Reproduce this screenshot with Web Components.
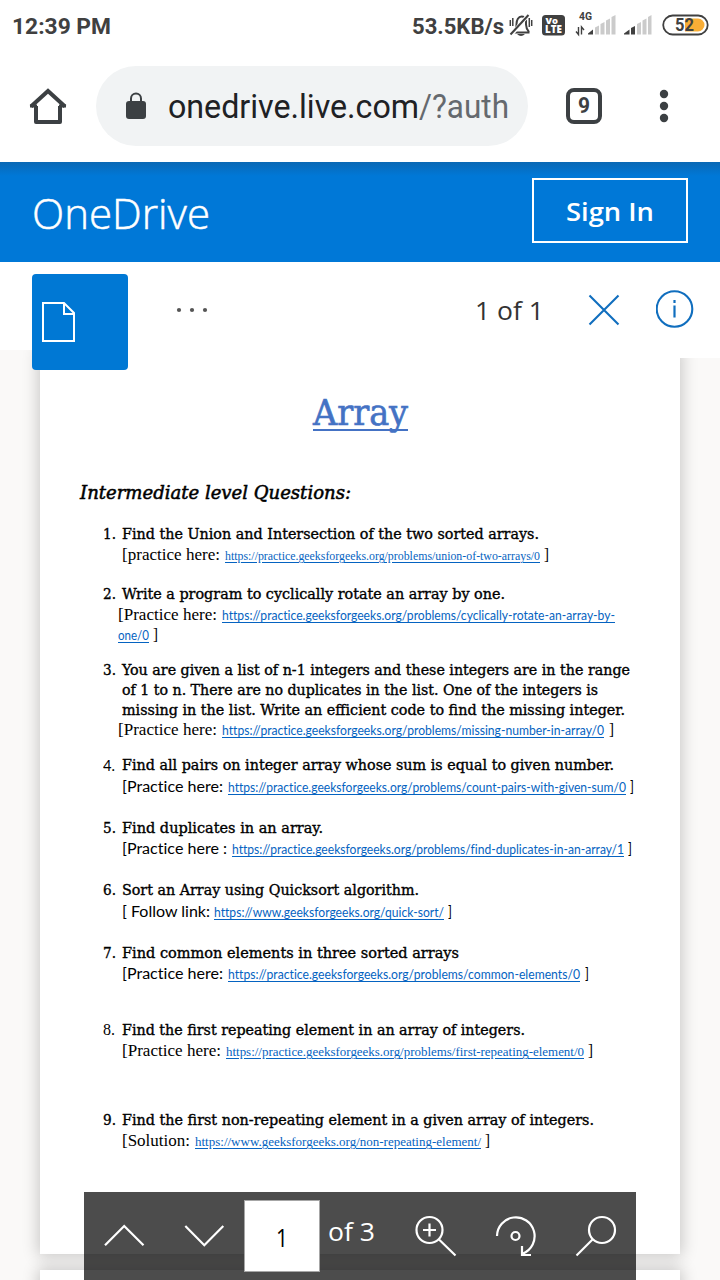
<!DOCTYPE html>
<html lang="en">
<head>
<meta charset="utf-8">
<title>OneDrive</title>
<style>
html,body{margin:0;padding:0}
body{width:720px;height:1280px;overflow:hidden;background:#fff;font-family:Roboto,sans-serif}
</style>
</head>
<body>
<phone-screen></phone-screen>
<script>
function define(name, html, ready){
  const t = document.createElement('template');
  t.innerHTML = html.trim();
  customElements.define(name, class extends HTMLElement{
    constructor(){
      super();
      this.attachShadow({mode:'open'}).appendChild(t.content.cloneNode(true));
    }
    connectedCallback(){ if(ready) ready(this, this.shadowRoot); }
  });
}

/* A run of text set to an exact advance width. */
define('text-run', `<style>
:host{display:inline-block;white-space:pre;line-height:20px;flex:none;color:#000}
span{display:inline-block;transform-origin:0 50%}
:host([face=cambria]){font:15.4px/20px "DejaVu Serif Condensed","DejaVu Serif",serif;font-stretch:condensed;-webkit-text-stroke:.35px #000}
:host([face=heading]){font:italic 18.4px/24px "DejaVu Serif Condensed","DejaVu Serif",serif;font-stretch:condensed;-webkit-text-stroke:.5px #000}
:host([face=title]){font:35px/44px "DejaVu Serif Condensed","DejaVu Serif",serif;font-stretch:condensed;color:#4472c4;-webkit-text-stroke:.6px #4472c4}
:host([face=times]){font:16.5px/20px "Liberation Serif",serif}
:host([face=calibri]){font:15.6px/20px Lato,sans-serif;font-variant-ligatures:none}
:host([face=tlink]){font:13px/20px "Liberation Serif",serif;color:#0563c1}
:host([face=clink]){font:12.6px/20px Lato,sans-serif;color:#0563c1;font-variant-ligatures:none}
:host([face$=link]) span{text-decoration:underline;text-decoration-thickness:1px;text-underline-offset:2px}
</style><span><slot></slot></span>`, (el, root)=>{
  const w = parseFloat(el.getAttribute('w')), s = root.querySelector('span');
  const n = s.getBoundingClientRect().width;
  if(w && n){ s.style.transform = 'scaleX(' + (w/n) + ')'; el.style.width = w + 'px'; s.style.width = n + 'px'; }
});

define('status-bar', `
<style>
:host{display:flex;height:52px;align-items:center;box-sizing:border-box;padding:0 11px 0 12px;color:#404040}
text-run{color:#404040;font:bold 22px/26px Roboto,sans-serif;margin-top:2px}
svg{display:block;flex:none}
.sp{flex:1}
.speed{margin-right:5px}
</style>
<text-run w="99">12:39 PM</text-run><div class="sp"></div>
<text-run class="speed" w="92">53.5KB/s</text-run>
<svg width="200" height="52" viewBox="509 0 200 52" fill="none" stroke="#404040">
 <path d="M512.5 32.500h17M514 32c2-2 2.500-4 2.500-8 0-4 2-7.500 5-7.500 2.500 0 4 1.500 4.500 4v4c0 3 1 5 3 7.500" stroke-width="2"/>
 <path d="M511.500 34.500l17-20" stroke="#fff" stroke-width="4"/><path d="M510.500 34.500l18-19.500" stroke-width="2"/>
 <path d="M510.300 20v6M512.800 18v8M531.700 20v6M529.300 18v9" stroke-width="1.500"/><path d="M517 34q4 4 8 0z" fill="#404040" stroke="none"/>
 <rect x="542" y="15" width="23" height="20.500" rx="3.500" fill="#404040" stroke="none"/>
 <text x="545.500" y="24" font-family="Open Sans" font-weight="800" font-size="9" textLength="12.500" lengthAdjust="spacingAndGlyphs" fill="#fff" stroke="none">Vo</text>
 <text x="545" y="33.300" font-family="Open Sans" font-weight="800" font-size="10" textLength="17" lengthAdjust="spacingAndGlyphs" fill="#fff" stroke="none">LTE</text>
 <text x="579" y="20" font-family="Roboto" font-weight="700" font-size="10" textLength="13" lengthAdjust="spacingAndGlyphs" fill="#404040" stroke="none">4G</text>
 <path d="M578.500 27v7.500l-2.500-3M581.500 34.500v-7.500l2.500 3" stroke-width="1.400"/>
 <g stroke="none" fill="#404040"><path d="M588 34.500v-1l5-4v5zM624 34.500v-1l5.500-4v5zM631 34.500v-6.500l4-2v8.500z"/></g>
 <g stroke="none" fill="#cbcbcb"><path d="M595 34.500v-7l4-2v9zM600.500 34.500v-10.500l4-2v12.500zM606 34.500v-14l4-2v16zM611.500 34.500v-17.500l4-2v19.500zM637 34.500v-10.500l4-2v12.500zM642.500 34.500v-14l4-2v16zM648 34.500v-17.500l3.500-2v19.500z"/></g>
 <rect x="663.200" y="15.500" width="44.500" height="19" rx="9.500" stroke-width="1.800"/>
 <path d="M685 18.500h13a6.500 6.500 0 0 1 0 13h-13z" fill="#f8ad36" stroke="none"/>
 <text x="675" y="31" font-family="Roboto" font-weight="700" font-size="17.500" textLength="19" lengthAdjust="spacingAndGlyphs" fill="#404040" stroke="none">52</text>
</svg>`);

define('browser-bar', `
<style>
:host{display:flex;height:110px;box-sizing:border-box;padding:14px 0 0 28px}
svg{display:block;flex:none}
.omni{width:432px;height:80px;border-radius:40px;background:#f1f3f4;margin-left:28px;display:flex;align-items:center;box-sizing:border-box;padding-left:29px}
.lock{margin-right:21px}
text-run{font:33px/44px Roboto,sans-serif;color:#202124;margin-top:2px}
.dim{color:#65696e}
.tab{width:36px;height:36px;box-sizing:border-box;border:4px solid #3c4043;border-radius:8px;margin:22px 0 0 38px;display:grid;place-items:center}
.tab text-run{font:bold 22px/26px Roboto,sans-serif;color:#3c4043;margin:0}
.dots{margin:22px 0 0 54px}
</style>
<svg width="40" height="80" viewBox="28 66 40 80" fill="none" stroke="#3c4043" stroke-width="4" stroke-linejoin="round"><path d="M36 106v16h24v-16" /><path d="M31 106.500l17-15.500 17 15.500" stroke-linejoin="miter"/><path d="M30 106h7M59 106h7" stroke-width="3"/></svg>
<div class="omni">
<svg class="lock" width="22" height="30" viewBox="0 0 22 30"><rect x="1" y="10" width="20" height="18" rx="3" fill="#3c4043"/><path d="M6 11V7.500a5 5 0 0 1 10 0V11" fill="none" stroke="#3c4043" stroke-width="2"/></svg>
<text-run w="251">onedrive.live.com</text-run><text-run class="dim" w="90">/?auth</text-run>
</div>
<div class="tab"><text-run w="12">9</text-run></div>
<svg class="dots" width="16" height="38" viewBox="0 0 16 38" fill="#3c4043"><circle cx="8" cy="6" r="4.200"/><circle cx="8" cy="18" r="4.200"/><circle cx="8" cy="30" r="4.200"/></svg>`);

define('site-header', `
<style>
:host{display:flex;height:100px;box-sizing:border-box;padding:16px 32px;justify-content:space-between;background:linear-gradient(#0a68b4,#0078d7 14px)}
.brand{font:300 42px/70px "Open Sans",sans-serif;color:#fff;-webkit-text-stroke:.5px #fff}
.btn{width:156px;height:65px;border:2px solid #fff;box-sizing:border-box;display:grid;place-items:center}
.btn text-run{font:600 25px/34px "Open Sans",sans-serif;color:#fff}
</style>
<text-run class="brand" w="178">OneDrive</text-run>
<div class="btn"><text-run w="88">Sign In</text-run></div>`);

define('file-toolbar', `
<style>
:host{display:flex;height:88px;background:#fff;box-sizing:border-box;padding:12px 26px 0 32px;position:relative;z-index:2}
.tile{width:96px;height:96px;flex:none;background:#0078d4;border-radius:4px}
svg{display:block;flex:none}
.more{margin:32px 0 0 46px}
text-run{margin:16px 0 0 265px;font:25px/40px "Open Sans",sans-serif;color:#333;height:40px}
.x{margin:20px 0 0 44px}.i{margin:14px 0 0 34px}
</style>
<div class="tile"><svg width="96" height="96" fill="none" stroke="#fff" stroke-width="2"><path d="M11 29h21l10 10v28H11z M32 29v11h10"/></svg></div>
<svg class="more" width="36" height="8" fill="#555"><circle cx="5" cy="4" r="2.100"/><circle cx="18" cy="4" r="2.100"/><circle cx="31" cy="4" r="2.100"/></svg>
<text-run w="69">1 of 1</text-run>
<svg class="x" width="34" height="34" stroke="#106ebe" stroke-width="2.100"><path d="M1.500 1.500l29 29M30.500 1.500l-29 29"/></svg>
<svg class="i" width="40" height="40" fill="none" stroke="#106ebe" stroke-width="2.100"><circle cx="18.500" cy="21" r="17.800"/><path d="M18.500 17.500v12M18.500 12v3" stroke-width="2.200"/></svg>`);

define('question-item', `
<style>
:host{display:grid;grid-template-columns:19px 1fr;padding-left:63px}
.n{height:20px;display:flex;align-items:baseline}
</style><div class="n"><slot name="n"></slot></div><div><slot></slot></div>`);

define('text-row', `
<style>:host{display:flex;height:20px;align-items:baseline;white-space:nowrap}</style><slot></slot>`);

const T='practice.geeksforgeeks.org/problems/';
const questions=[
 [0,['cambria',13,'1.'],[[0,0,['cambria',417,'Find the Union and Intersection of the two sorted arrays.']],
   [1,0,['times',98,'[practice here:'],['tlink',315,'https://'+T+'union-of-two-arrays/0',5],['times',5,']',4]]]],
 [19,['cambria',13,'2.'],[[0,0,['cambria',383,'Write a program to cyclically rotate an array by one.']],
   [1,-4,['times',99,'[Practice here:'],['clink',393,'https://'+T+'cyclically-rotate-an-array-by-',5]],
   [0,-4,['clink',31,'one/0'],['times',5,']',4]]]],
 [15,['cambria',13,'3.'],[[0,0,['cambria',508,'You are given a list of n-1 integers and these integers are in the range']],
   [0,0,['cambria',476,'of 1 to n. There are no duplicates in the list. One of the integers is']],
   [0,0,['cambria',503,'missing in the list. Write an efficient code to find the missing integer.']],
   [0,-4,['times',99,'[Practice here:'],['clink',382,'https://'+T+'missing-number-in-array/0',5],['times',5,']',5]]]],
 [15,['calibri',12,'4.'],[[0,0,['cambria',492,'Find all pairs on integer array whose sum is equal to given number.']],
   [1,0,['calibri',101,'[Practice here:'],['clink',398,'https://'+T+'count-pairs-with-given-sum/0',5],['calibri',4,']',4]]]],
 [22,['cambria',13,'5.'],[[0,0,['cambria',201,'Find duplicates in an array.']],
   [0,0,['calibri',105,'[Practice here :'],['clink',392,'https://'+T+'find-duplicates-in-an-array/1',5],['calibri',4,']',4]]]],
 [22,['cambria',13,'6.'],[[0,0,['cambria',297,'Sort an Array using Quicksort algorithm.']],
   [1,0,['calibri',88,'[ Follow link:'],['clink',230,'https://www.geeksforgeeks.org/quick-sort/',4],['calibri',4,']',4]]]],
 [22,['cambria',13,'7.'],[[0,0,['cambria',337,'Find common elements in three sorted arrays']],
   [0,0,['calibri',101,'[Practice here:'],['clink',352,'https://'+T+'common-elements/0',5],['calibri',4,']',5]]]],
 [37,['times',12,'8.'],[[0,0,['cambria',403,'Find the first repeating element in an array of integers.']],
   [1,0,['times',99,'[Practice here:'],['tlink',358,'https://'+T+'first-repeating-element/0',5],['times',5,']',4]]]],
 [49,['cambria',13,'9.'],[[0,0,['cambria',472,'Find the first non-repeating element in a given array of integers.']],
   [1,0,['times',68,'[Solution:'],['tlink',286,'https://www.geeksforgeeks.org/non-repeating-element/',5],['times',5,']',4]]]]
];
const run=([f,w,t,m=0],slot='')=>`<text-run ${slot} face="${f}" w="${w}" style="margin-left:${m}px">${t}</text-run>`;
const list=questions.map(([gap,n,rows])=>`<question-item style="margin-top:${gap}px">${run(n,'slot="n"')}${
  rows.map(([mt,ml,...segs])=>`<text-row style="margin-top:${mt}px;margin-left:${ml}px">${segs.map(s=>run(s)).join('')}</text-row>`).join('')
}</question-item>`).join('');

define('document-page', `
<style>
:host{display:block;flex:none;width:640px;height:904px;background:#fff;box-shadow:0 0 15px 2px rgba(0,0,0,.2);box-sizing:border-box;padding-top:41px;margin:0 40px}
.title{display:flex;justify-content:center;height:44px}
.title div{height:38px;border-bottom:2px solid #4472c4}
.h{padding:46px 0 0 40px;height:43px}
</style>
<div class="title"><div><text-run face="title" w="95">Array</text-run></div></div>
<div class="h"><text-run face="heading" w="271">Intermediate level Questions:</text-run></div>
${list}`);

define('page-controls', `
<style>
:host{display:flex;position:absolute;left:84px;bottom:0;width:552px;height:88px;background:rgba(0,0,0,.7);z-index:3}
svg{display:block;flex:none}
.box{width:76px;height:72px;box-sizing:border-box;border:1px solid #a6a6a6;background:#fff;margin-top:8px;display:grid;place-items:center;flex:none}
.box text-run{font:25px/34px "Open Sans",sans-serif;color:#000;margin-top:2px}
.of{font:25px/34px "Open Sans",sans-serif;color:#fff;margin:22px 0 0 8px;height:34px}
</style>
<svg width="160" height="88" viewBox="84 1192 160 88" fill="none" stroke="#fff" stroke-width="2.200"><path d="M105 1245.300l19.200-19.300 19.300 19.300M185.300 1226l19 19.300 19-19.300"/></svg>
<div class="box"><text-run w="12">1</text-run></div>
<text-run class="of" w="47">of 3</text-run>
<svg width="261" height="88" viewBox="375 1192 261 88" fill="none" stroke="#fff" stroke-width="2.200"><circle cx="429.500" cy="1230" r="13"/><path d="M423 1230h13M429.500 1223.500v13M439 1239.500l16.500 16M497 1236a18.800 18.800 0 1 1 26 17.500M522 1246v9h9M522 1255l5-4"/><circle cx="515.500" cy="1236" r="4"/><circle cx="602" cy="1230" r="13"/><path d="M592.500 1239.500l-16 16"/></svg>`);

define('phone-screen', `
<style>
:host{display:block;position:relative;width:720px;height:1280px;overflow:hidden;background:#fff}
.view{display:flex;flex-direction:column;gap:16px;height:930px;overflow:hidden;background:#faf9f8;position:relative}
.cap{position:absolute;left:40px;right:0;top:0;height:8px;background:#fff}
</style>
<status-bar></status-bar><browser-bar></browser-bar><site-header></site-header><file-toolbar></file-toolbar>
<div class="view"><document-page></document-page><next-page></next-page><div class="cap"></div></div>
<page-controls></page-controls>`);

define('next-page', `<style>:host{display:block;width:640px;height:100px;flex:none;margin:0 40px;background:#fff;box-shadow:0 0 15px 2px rgba(0,0,0,.2)}</style>`);
</script>
</body>
</html>
